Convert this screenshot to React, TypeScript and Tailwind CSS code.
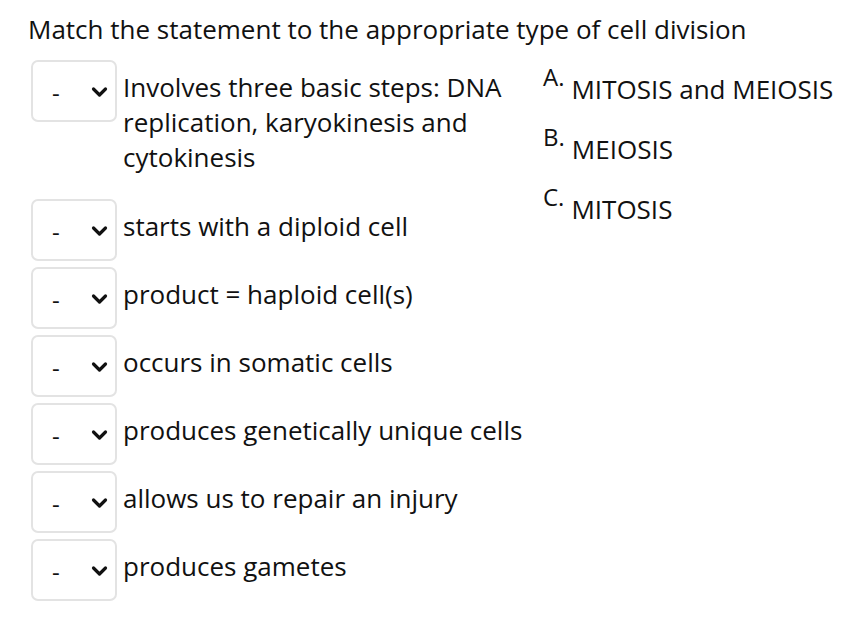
const statements = [
  "Involves three basic steps: DNA replication, karyokinesis and cytokinesis",
  "starts with a diploid cell",
  "product = haploid cell(s)",
  "occurs in somatic cells",
  "produces genetically unique cells",
  "allows us to repair an injury",
  "produces gametes",
];

const answers = [
  { letter: "A.", text: "MITOSIS and MEIOSIS" },
  { letter: "B.", text: "MEIOSIS" },
  { letter: "C.", text: "MITOSIS" },
];

function Chevron() {
  return (
    <svg width="17" height="12" viewBox="0 0 17 12" fill="none">
      <path
        d="M2.5 3 L8.5 9 L14.5 3"
        stroke="#111"
        strokeWidth="3.2"
        strokeLinecap="round"
        strokeLinejoin="round"
      />
    </svg>
  );
}

function SelectBox() {
  return (
    <div className="flex h-[62px] w-[86px] shrink-0 items-center rounded-[7px] border-2 border-[#e3e3e3] bg-white pl-[19px] pr-[7px]">
      <span className="mt-[4px] text-[24px] leading-none">-</span>
      <span className="ml-auto mt-[1px] flex">
        <Chevron />
      </span>
    </div>
  );
}

export default function App() {
  return (
    <div
      className="min-h-[618px] w-[862px] bg-white pl-[28px] pt-[13px] text-[#111]"
      style={{ fontFamily: '"Open Sans", sans-serif' }}
    >
      <h1 className="text-[26px] font-normal leading-[32px]">
        Match the statement to the appropriate type of cell division
      </h1>

      <div className="mt-[15px] flex pl-[3px]">
        <div className="flex flex-col gap-[6px]">
          {statements.map((s, i) => (
            <div key={s} className="flex items-start gap-[6px]">
              <SelectBox />
              <p
                className={`w-[410px] pt-[10px] text-[26px] leading-[35px] ${
                  i === 0 ? "pb-[18px]" : ""
                }`}
              >
                {s}
              </p>
            </div>
          ))}
        </div>

        <div className="ml-[10px] flex flex-col pt-[12px]">
          {answers.map((a) => (
            <div key={a.letter} className="h-[60px] text-[26px] leading-[35px]">
              <span className="relative -top-[13px] mr-[7px] text-[24px]">{a.letter}</span>
              {a.text}
            </div>
          ))}
        </div>
      </div>
    </div>
  );
}
